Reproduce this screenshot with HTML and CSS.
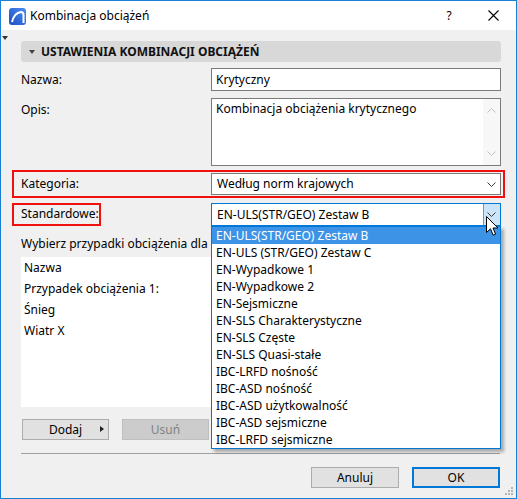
FILE: index.html
```html
<!DOCTYPE html>
<html lang="pl">
<head>
<meta charset="utf-8">
<title>Kombinacja obciążeń</title>
<link rel="stylesheet" href="styles.css">
</head>
<body>
<div class="window">
  <div class="titlebar">
    <svg class="logo" width="17" height="17" viewBox="0 0 17 17">
      <defs>
        <linearGradient id="lg" x1="0" y1="1" x2="1" y2="0">
          <stop offset="0" stop-color="#1d4fc4"/>
          <stop offset="1" stop-color="#4a8ef0"/>
        </linearGradient>
      </defs>
      <rect x="0" y="0" width="17" height="17" rx="3" fill="url(#lg)"/>
      <path d="M3 14 Q5 5 12 4 Q14.5 4 14.5 7 L14.5 15" fill="none" stroke="#fff" stroke-width="2"/>
    </svg>
    <span class="title">Kombinacja obciążeń</span>
    <span class="help">?</span>
    <svg class="close" width="11" height="11" viewBox="0 0 11 11">
      <path d="M0.5 0.5 L10.5 10.5 M10.5 0.5 L0.5 10.5" stroke="#000" stroke-width="1.1"/>
    </svg>
  </div>
  <div class="content">
    <span class="marker"></span>
    <div class="section-head"><span class="tri"></span>USTAWIENIA KOMBINACJI OBCIĄŻEŃ</div>

    <div class="row row-name">
      <div class="lbl">Nazwa:</div>
      <div class="field input">Krytyczny</div>
    </div>

    <div class="row row-desc">
      <div class="lbl lbl-top">Opis:</div>
      <div class="field textarea">
        <div class="ta-text">Kombinacja obciążenia krytycznego</div>
        <div class="sb">
          <svg width="9" height="5" viewBox="0 0 9 5"><path d="M0.5 4.5 L4.5 0.5 L8.5 4.5" fill="none" stroke="#c2c2c2"/></svg>
          <svg width="9" height="5" viewBox="0 0 9 5"><path d="M0.5 0.5 L4.5 4.5 L8.5 0.5" fill="none" stroke="#c2c2c2"/></svg>
        </div>
      </div>
    </div>

    <div class="row row-cat">
      <div class="lbl">Kategoria:</div>
      <div class="field select">
        <span class="sel-text">Według norm krajowych</span>
        <span class="sel-btn">
          <svg width="9" height="5" viewBox="0 0 9 5"><path d="M0.5 0.5 L4.5 4.5 L8.5 0.5" fill="none" stroke="#3c3c3c"/></svg>
        </span>
      </div>
    </div>

    <div class="row row-std">
      <div class="lbl"><span class="lbl-box">Standardowe:</span></div>
      <div class="field select focused">
        <span class="sel-text">EN-ULS(STR/GEO) Zestaw B</span>
        <span class="sel-btn pressed">
          <svg width="9" height="5" viewBox="0 0 9 5"><path d="M0.5 0.5 L4.5 4.5 L8.5 0.5" fill="none" stroke="#3c3c3c"/></svg>
        </span>
        <ul class="dd">
          <li class="sel">EN-ULS(STR/GEO) Zestaw B</li>
          <li>EN-ULS (STR/GEO) Zestaw C</li>
          <li>EN-Wypadkowe 1</li>
          <li>EN-Wypadkowe 2</li>
          <li>EN-Sejsmiczne</li>
          <li>EN-SLS Charakterystyczne</li>
          <li>EN-SLS Częste</li>
          <li>EN-SLS Quasi-stałe</li>
          <li>IBC-LRFD nośność</li>
          <li>IBC-ASD nośność</li>
          <li>IBC-ASD użytkowalność</li>
          <li>IBC-ASD sejsmiczne</li>
          <li>IBC-LRFD sejsmiczne</li>
        </ul>
        <svg class="cursor" width="13" height="21" viewBox="0 0 13 21">
          <path d="M0.5 0.5 L0.5 16.5 L4.5 12.8 L7.2 19.2 L9.6 18.2 L7 12 L12 12 Z" fill="#fff" stroke="#000" stroke-width="1" stroke-linejoin="round"/>
        </svg>
      </div>
    </div>

    <div class="hint">Wybierz przypadki obciążenia dla kombinacji:</div>

    <div class="cases">
      <div class="case">Nazwa</div>
      <div class="case">Przypadek obciążenia 1:</div>
      <div class="case">Śnieg</div>
      <div class="case">Wiatr X</div>
    </div>

    <div class="btns">
      <button class="btn btn-add">Dodaj<span class="arr"></span></button>
      <button class="btn btn-dis" disabled>Usuń</button>
    </div>

    <div class="sep"></div>

    <div class="footer">
      <button class="btn">Anuluj</button>
      <button class="btn ok">OK</button>
    </div>

    <svg class="grip" width="9" height="9" viewBox="0 0 9 9">
      <rect x="6" y="0" width="2" height="2" fill="#b5b5b5"/>
      <rect x="3" y="3" width="2" height="2" fill="#b5b5b5"/>
      <rect x="6" y="3" width="2" height="2" fill="#b5b5b5"/>
      <rect x="0" y="6" width="2" height="2" fill="#b5b5b5"/>
      <rect x="3" y="6" width="2" height="2" fill="#b5b5b5"/>
      <rect x="6" y="6" width="2" height="2" fill="#b5b5b5"/>
    </svg>
  </div>
</div>
</body>
</html>
```

FILE: styles.css
```css
* { box-sizing: border-box; }
html, body { margin: 0; padding: 0; background: #fff; }
body {
  font-family: "Noto Sans", "Open Sans", sans-serif;
  font-size: 12px;
  color: #000;
}
.window {
  width: 517px;
  height: 499px;
  border: 1px solid #1c7fd6;
  background: #f0f0f0;
  display: flex;
  flex-direction: column;
  overflow: hidden;
}
.titlebar {
  height: 29px;
  background: #fff;
  display: flex;
  align-items: center;
  padding-left: 8px;
  padding-right: 13px;
  flex: none;
}
.logo { flex: none; margin-top: 1px; }
.title {
  margin-left: 4px;
  flex: 1;
  font-size: 12px;
  line-height: 16px;
}
.help {
  width: 20px;
  text-align: center;
  font-size: 12px;
  margin-right: 29px;
}
.close { flex: none; margin-right: 4px; }

.content {
  position: relative;
  flex: 1;
  padding: 11px 15px 0 20px;
  display: flex;
  flex-direction: column;
}
.marker {
  position: absolute;
  left: 1px;
  top: 6px;
  width: 0; height: 0;
  border-left: 3px solid transparent;
  border-right: 3px solid transparent;
  border-top: 4px solid #333;
}
.section-head {
  height: 21px;
  background: #d8d8d8;
  border-radius: 3px;
  display: flex;
  align-items: center;
  padding-left: 8px;
  font-weight: bold;
  font-size: 12px;
  color: #111;
}
.tri {
  width: 0; height: 0;
  border-left: 3px solid transparent;
  border-right: 3px solid transparent;
  border-top: 4px solid #444;
  margin-right: 6px;
}

.row { display: flex; align-items: center; }
.lbl { width: 190px; flex: none; line-height: 16px; }
.field { flex: 1; background: #fff; border: 1px solid #7a7a7a; }

.row-name { margin-top: 6px; }
.input {
  height: 23px;
  line-height: 21px;
  padding-left: 4px;
}

.row-desc { margin-top: 7px; align-items: flex-start; }
.lbl-top { padding-top: 4px; }
.textarea {
  height: 68px;
  display: flex;
}
.ta-text { flex: 1; padding: 2px 4px; line-height: 16px; }
.sb {
  width: 17px;
  background: #f7f7f7;
  display: flex;
  flex-direction: column;
  justify-content: space-between;
  align-items: center;
  padding: 9px 0 9px;
}

.row-cat {
  margin: 4px -4px 0 -9px;
  border: 2px solid #f01010;
  padding: 1px 2px 1px 7px;
}
.select {
  height: 22px;
  display: flex;
  align-items: center;
  position: relative;
}
.sel-text { flex: 1; padding-left: 5px; line-height: 16px; }
.sel-btn {
  width: 17px;
  height: 100%;
  display: flex;
  align-items: center;
  justify-content: center;
  padding-right: 1px;
}

.row-std { margin-top: 5px; align-items: flex-start; }
.lbl-box {
  display: inline-block;
  width: 89px;
  margin-left: -9px;
  border: 2px solid #f01010;
  padding: 1px 0 2px 7px;
  line-height: 16px;
  white-space: nowrap;
}
.select.focused {
  height: 23px;
  border-color: #0078d7;
}
.sel-btn.pressed {
  background: #cce4f7;
  border-left: 1px solid #569de5;
}
.dd {
  position: absolute;
  left: -1px;
  right: -1px;
  top: 22px;
  margin: 0;
  padding: 0;
  list-style: none;
  background: #fff;
  border: 1px solid #0078d7;
  box-shadow: 3px 3px 3px rgba(0, 0, 0, 0.3);
  z-index: 5;
}
.dd li {
  height: 17px;
  line-height: 17px;
  padding-left: 4px;
  white-space: nowrap;
}
.dd li.sel { background: #3d93e6; color: #fff; }
.cursor {
  position: absolute;
  right: 1px;
  top: 12px;
  z-index: 6;
}

.hint {
  margin-top: 10px;
  line-height: 16px;
  white-space: nowrap;
  width: 190px;
  overflow: hidden;
}
.cases {
  margin-top: 5px;
  height: 150px;
  background: #fff;
  padding-left: 3px;
}
.case { height: 21px; line-height: 21px; }

.btns { margin-top: 12px; display: flex; gap: 13px; padding-left: 1px; }
.btn {
  font-family: inherit;
  font-size: 12px;
  color: #000;
  width: 88px;
  height: 21px;
  padding: 0;
  background: #e1e1e1;
  border: 1px solid #adadad;
  border-radius: 0;
  line-height: 18px;
}
.btn-add { position: relative; width: 87px; }
.arr {
  position: absolute;
  right: 4px;
  top: 6px;
  width: 0; height: 0;
  border-top: 3.5px solid transparent;
  border-bottom: 3.5px solid transparent;
  border-left: 4px solid #222;
}
.btn-dis { width: 87px; background: #cccccc; border-color: #bfbfbf; color: #838383; }

.sep { margin-top: 13px; height: 1px; background: #a0a0a0; margin-right: 1px; }

.footer {
  margin-top: 13px;
  display: flex;
  justify-content: flex-end;
  gap: 13px;
  padding-right: 1px;
}
.btn.ok { border: 2px solid #0078d7; line-height: 16px; }
.grip { position: absolute; right: 2px; bottom: 2px; }
```
